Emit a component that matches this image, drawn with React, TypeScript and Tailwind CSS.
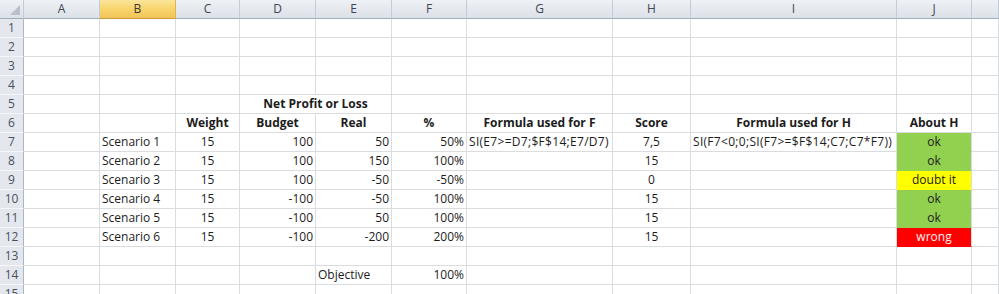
type Align = "l" | "c" | "r";

type Cell = {
  v?: string;
  a?: Align;
  b?: boolean;
  fill?: string;
  text?: string;
  span?: number;
  formula?: boolean;
};

const COLS = ["A", "B", "C", "D", "E", "F", "G", "H", "I", "J", "K"];

const alignClass: Record<Align, string> = {
  l: "justify-start pl-[2px]",
  c: "justify-center",
  r: "justify-end pr-[2px]",
};

const ok: Cell = { v: "ok", a: "c", fill: "bg-[#92d050] border-b-[#92d050]" };

const scenario = (
  n: number,
  budget: string,
  real: string,
  pct: string,
  score: string,
  about: Cell,
  extra: { g?: string; i?: string } = {}
): Cell[] => [
  {},
  { v: `Scenario ${n}`, a: "l" },
  { v: "15", a: "c" },
  { v: budget, a: "r" },
  { v: real, a: "r" },
  { v: pct, a: "r" },
  { v: extra.g, a: "l", formula: true },
  { v: score, a: "c" },
  { v: extra.i, a: "l", formula: true },
  about,
  {},
];

const blank = (): Cell[] => COLS.map(() => ({}));

const rows: Cell[][] = [
  blank(),
  blank(),
  blank(),
  blank(),
  [{}, {}, {}, { v: "Net Profit or Loss", a: "c", b: true, span: 2 }, {}, {}, {}, {}, {}, {}],
  [
    {},
    {},
    { v: "Weight", a: "c", b: true },
    { v: "Budget", a: "c", b: true },
    { v: "Real", a: "c", b: true },
    { v: "%", a: "c", b: true },
    { v: "Formula used for F", a: "c", b: true },
    { v: "Score", a: "c", b: true },
    { v: "Formula used for H", a: "c", b: true },
    { v: "About H", a: "c", b: true },
    {},
  ],
  scenario(1, "100", "50", "50%", "7,5", ok, {
    g: "SI(E7>=D7;$F$14;E7/D7)",
    i: "SI(F7<0;0;SI(F7>=$F$14;C7;C7*F7))",
  }),
  scenario(2, "100", "150", "100%", "15", ok),
  scenario(3, "100", "-50", "-50%", "0", {
    v: "doubt it",
    a: "c",
    fill: "bg-[#ffff00] border-b-[#ffff00]",
  }),
  scenario(4, "-100", "-50", "100%", "15", ok),
  scenario(5, "-100", "50", "100%", "15", ok),
  scenario(6, "-100", "-200", "200%", "15", {
    v: "wrong",
    a: "c",
    fill: "bg-[#ff0000] border-b-[#ff0000]",
    text: "text-[#fff0f0]",
  }),
  blank(),
  [{}, {}, {}, {}, { v: "Objective", a: "l" }, { v: "100%", a: "r" }, {}, {}, {}, {}, {}],
  blank(),
];

function CornerCell() {
  return (
    <div className="relative h-[19px] bg-gradient-to-b from-[#eef1f5] to-[#dce1e8] border-r border-b border-r-[#c3cbd6] border-b-[#9fadbf]">
      <svg className="absolute right-[3px] bottom-[3px]" width="10" height="10" viewBox="0 0 10 10">
        <polygon points="10,0 10,10 0,10" fill="#b9c0c9" />
      </svg>
    </div>
  );
}

function ColHeader({ label, selected }: { label: string; selected: boolean }) {
  return (
    <div
      className={
        selected
          ? "flex h-[19px] items-center justify-center border-r border-b border-r-[#e2b451] border-b-[#c99a3a] bg-gradient-to-b from-[#fbe59a] via-[#f8d56c] to-[#f1c358] text-[12px] text-[#3d3a33]"
          : "flex h-[19px] items-center justify-center border-r border-b border-r-[#c3cbd6] border-b-[#9fadbf] bg-gradient-to-b from-[#eef1f5] to-[#dce1e8] text-[12px] text-[#3f4650]"
      }
    >
      {label === "K" ? "" : label}
    </div>
  );
}

function RowHeader({ n }: { n: number }) {
  return (
    <div className="flex h-[19px] items-center justify-center border-r border-b border-r-[#a9b6c6] border-b-[#f4f6f9] bg-[#e4e8ee] text-[12px] text-[#4a515b]">
      {n}
    </div>
  );
}

function DataCell({ cell }: { cell: Cell }) {
  const base = "flex h-[19px] items-center whitespace-nowrap border-r border-b text-[12px]";
  const fill = cell.fill ?? "bg-white border-b-[#dadcdd]";
  const color = cell.text ?? "text-[#1c1c1c]";
  const weight = cell.b ? "font-bold" : "font-normal";
  const span = cell.span === 2 ? "col-span-2" : "";
  const tracking = cell.formula ? "tracking-[0.3px]" : "";
  return (
    <div
      className={`${base} border-r-[#dadcdd] ${fill} ${color} ${weight} ${span} ${tracking} ${alignClass[cell.a ?? "l"]}`}
    >
      {cell.v}
    </div>
  );
}

export default function App() {
  return (
    <div
      className="h-[294px] w-[999px] overflow-hidden bg-white"
      style={{ fontFamily: '"Open Sans", "Liberation Sans", sans-serif' }}
    >
      <div className="grid grid-cols-[24px_76px_76px_64px_76px_76px_75px_146px_78px_206px_75px_27px]">
        <CornerCell />
        {COLS.map((c) => (
          <ColHeader key={c} label={c} selected={c === "B"} />
        ))}
        {rows.map((row, r) => (
          <div key={r} className="contents">
            <RowHeader n={r + 1} />
            {row.map((cell, c) => (
              <DataCell key={c} cell={cell} />
            ))}
          </div>
        ))}
      </div>
    </div>
  );
}
